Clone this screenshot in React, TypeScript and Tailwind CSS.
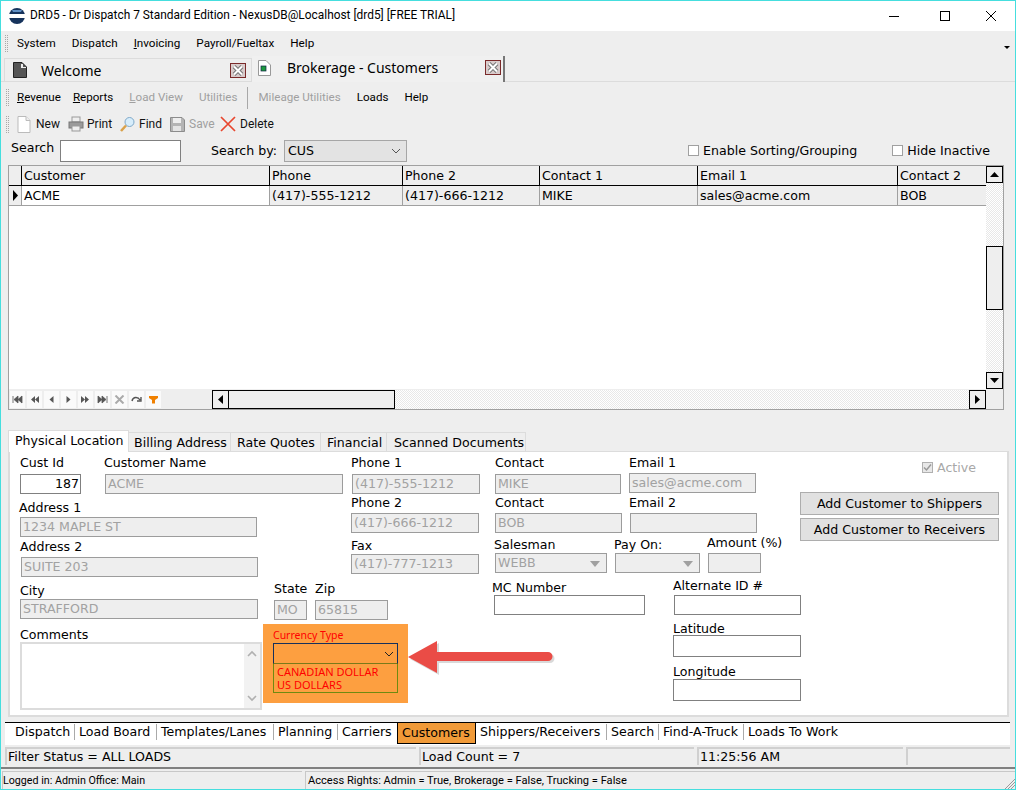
import type { ReactNode } from "react";

const sans = "font-['DejaVu_Sans',sans-serif]";
const ui = "font-['Roboto',sans-serif]";
const noto = "font-['Noto_Sans',sans-serif]";

const columns = [
  { label: "Customer", value: "ACME", w: "w-[248px]" },
  { label: "Phone", value: "(417)-555-1212", w: "w-[133px]" },
  { label: "Phone 2", value: "(417)-666-1212", w: "w-[137px]" },
  { label: "Contact 1", value: "MIKE", w: "w-[158px]" },
  { label: "Email 1", value: "sales@acme.com", w: "w-[200px]" },
  { label: "Contact 2", value: "BOB", w: "w-[88px]" },
];

const bottomTabs = [
  { label: "Dispatch", w: "w-[60px] mr-[4px] border-r" },
  { label: "Load Board", w: "w-[78px] mr-[4px] border-r" },
  { label: "Templates/Lanes", w: "w-[113px] mr-[4px] border-r" },
  { label: "Planning", w: "w-[60px] mr-[4px] border-r" },
  { label: "Carriers", w: "w-[55px]" },
  { label: "Customers", w: "w-[79px]", active: true },
  { label: "Shippers/Receivers", w: "w-[131px] pl-[4px] border-r mr-[4px]" },
  { label: "Search", w: "w-[48px] mr-[4px] border-r" },
  { label: "Find-A-Truck", w: "w-[81px] mr-[4px] border-r" },
  { label: "Loads To Work", w: "w-[110px]" },
];

function Grip() {
  return <div className="w-[3px] h-[17px] mr-[8px] border-x border-dotted border-[#a8a8a8]" />;
}

function CloseBox() {
  return (
    <svg width="16" height="15" viewBox="0 0 16 15" className="shrink-0">
      <rect x="0.5" y="0.5" width="15" height="14" fill="#d9cccc" stroke="#7a2a2a" />
      <path d="M4 3.5 L12 11.5 M12 3.5 L4 11.5" stroke="#777" strokeWidth="4" />
      <path d="M4 3.5 L12 11.5 M12 3.5 L4 11.5" stroke="#fff" strokeWidth="2" />
    </svg>
  );
}

function Box({ className, children }: { className: string; children?: ReactNode }) {
  return (
    <div className={`h-[20px] border border-[#9c9c9c] bg-[#eeeeee] text-[#a2a2a2] pl-[2px] leading-[18px] whitespace-nowrap overflow-hidden ${className}`}>
      {children}
    </div>
  );
}

function ComboBox({ className, children }: { className: string; children?: ReactNode }) {
  return (
    <Box className={`relative ${className}`}>
      {children}
      <svg width="10" height="6" viewBox="0 0 10 6" className="absolute right-[6px] top-[7px]">
        <path d="M0 0 H10 L5 6 Z" fill="#a0a0a0" />
      </svg>
    </Box>
  );
}

function Input({ className, children }: { className: string; children?: ReactNode }) {
  return <div className={`border border-[#808080] bg-white ${className}`}>{children}</div>;
}

function ScrollButton({ dir, className }: { dir: "up" | "down" | "left" | "right"; className: string }) {
  const tri = { up: "M1 8 L5.5 3 L10 8 Z", down: "M1 3 L5.5 8 L10 3 Z", left: "M8 1 L3 5.5 L8 10 Z", right: "M3 1 L8 5.5 L3 10 Z" }[dir];
  return (
    <div className={`border border-black bg-[#eeeeee] flex items-center justify-center shrink-0 ${className}`}>
      <svg width="11" height="11" viewBox="0 0 11 11">
        <path d={tri} fill="#000" />
      </svg>
    </div>
  );
}

function NavIcon({ children }: { children: ReactNode }) {
  return (
    <div className="w-[15px] h-[17px] bg-white/70 flex items-center justify-center mr-[2px]">
      <svg width="11" height="9" viewBox="0 0 11 9">{children}</svg>
    </div>
  );
}

function Navigator() {
  const c = "#555";
  return (
    <div className="flex items-center pl-[1px] w-[203px] shrink-0">
      <NavIcon><path d="M1 1 V8 M10 1 L6 4.5 L10 8 Z M6 1 L2 4.5 L6 8 Z" fill={c} stroke={c} strokeWidth="0.8" /></NavIcon>
      <NavIcon><path d="M10 1 L6 4.5 L10 8 Z M6 1 L2 4.5 L6 8 Z" fill={c} /></NavIcon>
      <NavIcon><path d="M7.5 1 L3.5 4.5 L7.5 8 Z" fill={c} /></NavIcon>
      <NavIcon><path d="M3.5 1 L7.5 4.5 L3.5 8 Z" fill={c} /></NavIcon>
      <NavIcon><path d="M1 1 L5 4.5 L1 8 Z M5 1 L9 4.5 L5 8 Z" fill={c} /></NavIcon>
      <NavIcon><path d="M10 1 V8 M1 1 L5 4.5 L1 8 Z M5 1 L9 4.5 L5 8 Z" fill={c} stroke={c} strokeWidth="0.8" /></NavIcon>
      <NavIcon><path d="M1.5 0.5 L9.5 8.5 M9.5 0.5 L1.5 8.5" stroke="#aaa" strokeWidth="2" /></NavIcon>
      <NavIcon><path d="M1 6 C2 1.5 7 1.5 9 5 M10 2 V6 H6" fill="none" stroke={c} strokeWidth="1.4" /></NavIcon>
      <NavIcon><path d="M1 1 H10 V3 L7 5 V8.5 H4 V5 L1 3 Z" fill="#f08000" /></NavIcon>
    </div>
  );
}

function Toolbar() {
  return (
    <div className={`flex items-center h-[24px] pl-[5px] text-[12px] text-[#111] ${ui}`}>
      <Grip />
      <svg width="14" height="17" viewBox="0 0 14 17" className="mr-[5px]">
        <path d="M1 .5 H9 L13 4.5 V16.5 H1 Z" fill="#fff" stroke="#bbb" />
        <path d="M9 .5 V4.5 H13" fill="#eee" stroke="#bbb" />
      </svg>
      <span className="w-[24px] mr-[8px]">New</span>
      <svg width="16" height="16" viewBox="0 0 16 16" className="mr-[3px]">
        <rect x="4" y="1" width="8" height="5" fill="#eee" stroke="#999" />
        <rect x="1" y="6" width="14" height="6" fill="#9a9a9a" stroke="#777" />
        <rect x="4" y="10" width="8" height="5" fill="#eee" stroke="#999" />
      </svg>
      <span className="w-[25px] mr-[7px]">Print</span>
      <svg width="17" height="17" viewBox="0 0 17 17" className="mr-[3px]">
        <circle cx="10.5" cy="6" r="4.5" fill="#d7edfb" stroke="#7fa8c8" />
        <path d="M7 9.5 L2 15" stroke="#d9a14a" strokeWidth="2.5" />
      </svg>
      <span className="w-[23px] mr-[8px]">Find</span>
      <svg width="15" height="15" viewBox="0 0 15 15" className="mr-[4px]">
        <path d="M.5 .5 H12 L14.5 3 V14.5 H.5 Z" fill="#b4b4b4" stroke="#8c8c8c" />
        <rect x="3" y="1" width="8" height="5" fill="#eee" />
        <rect x="3" y="9" width="8" height="5" fill="#e4e4e4" />
      </svg>
      <span className="w-[24px] mr-[7px] text-[#a0a0a0]">Save</span>
      <svg width="16" height="16" viewBox="0 0 16 16" className="mr-[4px]">
        <path d="M1 1 L15 15 M15 1 L1 15" stroke="#e8472f" strokeWidth="1.7" />
      </svg>
      <span>Delete</span>
    </div>
  );
}

function App() {
  return (
    <div className={`relative w-[1016px] h-[790px] overflow-hidden border border-[#45dede] bg-[#eeeeee] text-[12.6px] text-black ${sans}`}>
      {/* Title bar */}
      <div className={`h-[30px] bg-white flex items-center pl-[8px] text-[11.9px] ${ui}`}>
        <svg width="16" height="16" viewBox="0 0 16 16" className="mr-[5px]">
          <circle cx="8" cy="8" r="8" fill="#16335c" />
          <path d="M0 6 H16 V10 H0 Z" fill="#fff" />
          <path d="M3 2 H13 L12 4 H4 Z" fill="#5f8fc4" />
        </svg>
        <span>DRD5 - Dr Dispatch 7 Standard Edition - NexusDB@Localhost [drd5] [FREE TRIAL]</span>
        <div className="ml-auto flex items-center">
          <svg width="46" height="16" viewBox="0 0 46 16"><path d="M13 8.5 H23" stroke="#000" /></svg>
          <svg width="46" height="16" viewBox="0 0 46 16"><rect x="18.5" y="3.5" width="9" height="9" fill="none" stroke="#000" /></svg>
          <svg width="47" height="16" viewBox="0 0 47 16"><path d="M18 3 L28 13 M28 3 L18 13" stroke="#000" /></svg>
        </div>
      </div>

      {/* Main menu */}
      <div className={`relative h-[25px] flex items-center pl-[4px] text-[11.7px] ${ui}`}>
        <Grip />
        <div className="flex gap-[16px] ml-[1px]">
          <span>System</span>
          <span>Dispatch</span>
          <span><u>I</u>nvoicing</span>
          <span>Payroll/Fueltax</span>
          <span>Help</span>
        </div>
        <svg width="6" height="3" viewBox="0 0 6 3" className="absolute right-[5px] top-[15px]"><path d="M0 0 H6 L3 3 Z" fill="#000" /></svg>
      </div>

      {/* Window tabs */}
      <div className="h-[26px] flex items-end pl-[3px] border-b border-[#dcdcdc]">
        <div className="w-[248px] h-[23px] flex items-center border border-b-0 border-[#dcdcdc] pl-[8px] pr-[5px]">
          <svg width="14" height="16" viewBox="0 0 14 16" className="mr-[14px]">
            <path d="M.5 .5 H9 L13.5 5 V15.5 H.5 Z" fill="#555" stroke="#222" />
            <path d="M8 2 H10 V5 H13 V6 H8 Z" fill="#eee" />
          </svg>
          <span className={`text-[14px] ${noto}`}>Welcome</span>
          <div className="ml-auto"><CloseBox /></div>
        </div>
        <div className="w-[253px] h-[26px] flex items-center border-r-2 border-[#777] pl-[6px] pr-[2px] bg-[#f0f0f0] mb-[-1px] pb-[3px]">
          <svg width="13" height="16" viewBox="0 0 13 16" className="mr-[16px]">
            <path d="M.5 .5 H8 L12.5 5 V15.5 H.5 Z" fill="#fff" stroke="#999" />
            <rect x="3" y="6" width="5" height="5" fill="#1d9a3f" stroke="#124" strokeWidth="0.7" />
          </svg>
          <span className={`text-[14px] ${noto}`}>Brokerage - Customers</span>
          <div className="ml-auto"><CloseBox /></div>
        </div>
      </div>

      {/* Sub menu */}
      <div className={`h-[30px] flex items-center pl-[5px] pt-[1px] text-[11.6px] ${ui}`}>
        <Grip />
        <span className="mr-[12px]"><u>R</u>evenue</span>
        <span className="mr-[16px]"><u>R</u>eports</span>
        <span className="mr-[16px] text-[#a0a0a0]"><u>L</u>oad View</span>
        <span className="mr-[10px] text-[#a0a0a0]">Utilities</span>
        <div className="w-px h-[22px] bg-[#a8a8a8] mr-[10px]" />
        <span className="mr-[16px] text-[#a0a0a0]">Mileage Utilities</span>
        <span className="mr-[16px]">Loads</span>
        <span>Help</span>
      </div>

      <Toolbar />

      {/* Search row */}
      <div className="h-[29px] flex items-center pl-[10px] relative">
        <span className="mb-[5px] w-[49px]">Search</span>
        <Input className="w-[121px] h-[22px]" />
        <span className="ml-[30px] mr-[7px] mt-[1px]">Search by:</span>
        <div className="relative w-[123px] h-[22px] border border-[#a6a6a6] bg-[#e3e3e3] pl-[3px] leading-[20px]">
          CUS
          <svg width="10" height="6" viewBox="0 0 10 6" className="absolute right-[5px] top-[7px]"><path d="M1 1 L5 5 L9 1" fill="none" stroke="#555" /></svg>
        </div>
        <div className="ml-auto flex items-center mt-[1px]">
          <div className="w-[11px] h-[11px] border border-[#a0a0a0] bg-white mr-[4px]" />
          <span className="mr-[35px]">Enable Sorting/Grouping</span>
          <div className="w-[11px] h-[11px] border border-[#a0a0a0] bg-white mr-[4px]" />
          <span className="mr-[25px]">Hide Inactive</span>
        </div>
      </div>

      {/* Customer grid */}
      <div className="ml-[7px] w-[996px] h-[245px] border border-[#a0a0a0] bg-white flex flex-col">
        <div className="flex h-[223px]">
          <div className="w-[977px]">
            <div className="flex h-[20px] bg-[#eeeeee] border-b border-black leading-[20px]">
              <div className="w-[13px] border-r border-black" />
              {columns.map((c) => (
                <div key={c.label} className={`${c.w} border-r border-black pl-[2px] last:border-r-0`}>{c.label}</div>
              ))}
            </div>
            <div className="flex h-[20px] border-b border-[#a0a0a0] leading-[19px]">
              <div className="w-[13px] border-r border-[#a0a0a0] bg-[#eeeeee] flex items-center justify-center">
                <svg width="7" height="11" viewBox="0 0 7 11"><path d="M1 0 L6 5.5 L1 11 Z" fill="#000" /></svg>
              </div>
              {columns.map((c, i) => (
                <div key={c.label} className={`${c.w} border-r border-[#a0a0a0] pl-[2px] last:border-r-0 ${i === 0 ? "bg-white" : "bg-[#eeeeee]"}`}>{c.value}</div>
              ))}
            </div>
          </div>
          <div className="w-[17px] flex flex-col bg-[repeating-conic-gradient(#e8e8e8_0_25%,#fff_0_50%)] bg-[length:2px_2px]">
            <ScrollButton dir="up" className="h-[17px]" />
            <div className="mt-[63px] h-[64px] border border-black bg-[#eeeeee]" />
            <div className="mt-auto"><ScrollButton dir="down" className="h-[17px]" /></div>
          </div>
        </div>
        <div className="flex h-[20px] pt-[1px] bg-[#eeeeee]">
          <Navigator />
          <ScrollButton dir="left" className="w-[17px] h-[19px]" />
          <div className="w-[166px] h-[19px] border border-l-0 border-black bg-[#eeeeee]" />
          <div className="w-[574px] h-[19px] bg-[repeating-conic-gradient(#e8e8e8_0_25%,#fff_0_50%)] bg-[length:2px_2px]" />
          <ScrollButton dir="right" className="w-[17px] h-[19px]" />
        </div>
      </div>

      {/* Form tabs */}
      <div className="flex items-end h-[22px] mt-[19px] ml-[7px] whitespace-nowrap">
        <div className="w-[121px] h-[22px] bg-white border border-b-0 border-[#dcdcdc] pl-[6px] leading-[20px] relative z-10 mb-[-1px]">Physical Location</div>
        <div className="h-[19px] flex border-t border-r border-[#dcdcdc] leading-[19px]">
          <div className="w-[102px] pl-[5px] border-r border-[#dcdcdc]">Billing Address</div>
          <div className="w-[90px] pl-[6px] border-r border-[#dcdcdc]">Rate Quotes</div>
          <div className="w-[66px] pl-[6px] border-r border-[#dcdcdc]">Financial</div>
          <div className="w-[138px] pl-[7px]">Scanned Documents</div>
        </div>
      </div>

      {/* Form panel */}
      <div className="ml-[7px] w-[1001px] h-[266px] bg-white border-2 border-t-1 border-[#dcdcdc] flex leading-[15px]">
        {/* Names and address */}
        <div className="w-[331px] ml-[10px] shrink-0">
          <div className="flex">
            <div className="w-[84px] shrink-0 pt-[3px]">
              <div className="mb-[4px]">Cust Id</div>
              <Input className="w-[61px] h-[20px] text-right pr-[1px] leading-[18px]">187</Input>
            </div>
            <div className="pt-[3px]">
              <div className="mb-[4px]">Customer Name</div>
              <Box className="w-[238px] ml-[1px]">ACME</Box>
            </div>
          </div>
          <div className="mt-[6px] ml-[-1px]">Address 1</div>
          <Box className="w-[237px] mt-[2px]">1234 MAPLE ST</Box>
          <div className="mt-[2px]">Address 2</div>
          <Box className="w-[237px] mt-[3px] ml-[1px]">SUITE 203</Box>
          <div className="flex items-start mt-[5px] w-[368px]">
            <div className="w-[254px] shrink-0 pt-[1px]">
              <div className="mb-[1px]">City</div>
              <Box className="w-[238px]">STRAFFORD</Box>
            </div>
            <div className="w-[41px] shrink-0">
              <div className="mb-[3px] mt-[-1px] pb-[1px]">State</div>
              <Box className="w-[33px]">MO</Box>
            </div>
            <div>
              <div className="mb-[3px] mt-[-1px] pb-[1px]">Zip</div>
              <Box className="w-[73px]">65815</Box>
            </div>
          </div>
          <div className="flex mt-[4px] w-[388px]">
            <div className="w-[243px] shrink-0 pt-[3px]">
              <div>Comments</div>
              <div className="w-[242px] h-[68px] border-2 border-[#dcdcdc] flex justify-end">
                <div className="w-[16px] h-full bg-[#f2f2f2] flex flex-col justify-between items-center py-[6px]">
                  <svg width="10" height="7" viewBox="0 0 10 7"><path d="M1 6 L5 2 L9 6" fill="none" stroke="#b0b0b0" strokeWidth="1.6" /></svg>
                  <svg width="10" height="7" viewBox="0 0 10 7"><path d="M1 1 L5 5 L9 1" fill="none" stroke="#b0b0b0" strokeWidth="1.6" /></svg>
                </div>
              </div>
            </div>
            <div className={`w-[145px] h-[79px] bg-[#fd9f40] pl-[10px] pt-[5px] text-[#ff0000] text-[10.5px] ${noto}`}>
              <div className="leading-[13px] mb-[1px]">Currency Type</div>
              <div className="relative w-[125px] h-[21px] border border-[#15305c] border-b-[#7a7a1a]">
                <svg width="10" height="6" viewBox="0 0 10 6" className="absolute right-[3px] top-[7px]"><path d="M1 1 L5 5 L9 1" fill="none" stroke="#222" /></svg>
              </div>
              <div className="w-[125px] h-[29px] border border-t-0 border-[#6f8a10] pl-[3px] pt-[1px] text-[11px] leading-[13px]">
                <div>CANADIAN DOLLAR</div>
                <div>US DOLLARS</div>
              </div>
            </div>
          </div>
        </div>

        {/* Phones */}
        <div className="w-[144px] shrink-0 pt-[3px]">
          <div className="mb-[4px]">Phone 1</div>
          <Box className="w-[128px] ml-[1px]">(417)-555-1212</Box>
          <div className="mt-[1px] mb-[3px]">Phone 2</div>
          <Box className="w-[128px]">(417)-666-1212</Box>
          <div className="mt-[5px] mb-[1px]">Fax</div>
          <Box className="w-[128px]">(417)-777-1213</Box>
        </div>

        {/* Contacts, salesman and ids */}
        <div className="w-[305px] shrink-0 pt-[3px]">
          <div className="flex">
            <div className="w-[134px] shrink-0">
              <div className="mb-[4px]">Contact</div>
              <Box className="w-[126px]">MIKE</Box>
              <div className="mt-[1px] mb-[3px]">Contact</div>
              <Box className="w-[127px]">BOB</Box>
            </div>
            <div>
              <div className="mb-[3px]">Email 1</div>
              <Box className="w-[127px]">sales@acme.com</Box>
              <div className="mt-[2px] mb-[3px]">Email 2</div>
              <Box className="w-[127px] ml-[1px]" />
            </div>
          </div>
          <div className="flex items-end mt-[2px] ml-[-1px]">
            <div className="w-[120px] shrink-0">
              <div className="mb-[1px]">Salesman</div>
              <ComboBox className="w-[112px] ml-[1px]">WEBB</ComboBox>
            </div>
            <div className="w-[93px] shrink-0">
              <div className="mb-[1px]">Pay On:</div>
              <ComboBox className="w-[85px] ml-[1px]" />
            </div>
            <div>
              <div className="mb-[3px]">Amount (%)</div>
              <Box className="w-[53px] ml-[1px]" />
            </div>
          </div>
          <div className="flex mt-[5px]">
            <div className="w-[180px] shrink-0 ml-[-3px] pt-[2px]">
              <div>MC Number</div>
              <Input className="w-[151px] h-[20px] ml-[2px]" />
            </div>
            <div className="ml-[1px]">
              <div className="mb-[2px]">Alternate ID #</div>
              <Input className="w-[127px] h-[20px] ml-[1px]" />
              <div className="mt-[6px] mb-[-1px]">Latitude</div>
              <Input className="w-[128px] h-[22px]" />
              <div className="mt-[7px]">Longitude</div>
              <Input className="w-[128px] h-[22px]" />
            </div>
          </div>
        </div>

        {/* Active flag and actions */}
        <div className="flex-1 pt-[8px]">
          <div className="flex items-center ml-[122px] text-[#a8a8a8]">
            <div className="w-[11px] h-[11px] border border-[#b0b0b0] bg-[#e8e8e8] mr-[4px] flex items-center justify-center">
              <svg width="9" height="9" viewBox="0 0 9 9"><path d="M1 4.5 L3.5 7 L8 1.5" fill="none" stroke="#999" strokeWidth="1.5" /></svg>
            </div>
            <span>Active</span>
          </div>
          <div className="mt-[17px] w-[199px] h-[23px] border border-[#adadad] bg-[#e1e1e1] text-center leading-[21px]">Add Customer to Shippers</div>
          <div className="mt-[3px] w-[199px] h-[23px] border border-[#adadad] bg-[#e1e1e1] text-center leading-[21px]">Add Customer to Receivers</div>
        </div>
      </div>

      {/* Module tabs */}
      <div className="mt-[5px] ml-[4px] w-[1005px] h-[23px] bg-white border-t border-black flex whitespace-nowrap">
        <div className="w-[10px]" />
        {bottomTabs.map((t) => (
          <div
            key={t.label}
            className={t.active ? `${t.w} pl-[4px] h-[22px] mt-[-1px] bg-[#f09a38] border border-black leading-[20px]` : `${t.w} border-[#aaaaaa] h-[16px] mt-[1px] leading-[16px]`}
          >
            {t.label}
          </div>
        ))}
      </div>

      {/* Status bars */}
      <div className="flex mt-[2px] ml-[4px] h-[18px] gap-[3px] leading-[16px]">
        <div className="w-[411px] border-l-2 border-t-2 border-[#d0d0d0] pl-[1px]">Filter Status = ALL LOADS</div>
        <div className="w-[275px] border-l-2 border-t-2 border-[#d0d0d0] pl-[1px]">Load Count = 7</div>
        <div className="w-[206px] border-l-2 border-t-2 border-[#d0d0d0] pl-[1px]">11:25:56 AM</div>
        <div className="w-[104px] border-l-2 border-t-2 border-[#d0d0d0]" />
      </div>
      <div className="mt-[2px] border-t-2 border-[#808080] h-[22px] pt-[2px] flex gap-[3px] pl-[1px] leading-[17px]">
        <div className={`w-[300px] h-[18px] border-t border-l border-[#c8c8c8] whitespace-nowrap text-[10.7px] ${ui}`}>Logged in: Admin Office: Main</div>
        <div className={`flex-1 h-[18px] border-t border-l border-[#c8c8c8] pl-[2px] relative text-[11.1px] ${ui}`}>
          Access Rights: Admin = True, Brokerage = False, Trucking = False
          <svg width="11" height="11" viewBox="0 0 11 11" className="absolute right-0 bottom-0"><path d="M11 1 L1 11 M11 4 L4 11 M11 7 L7 11" stroke="#999" /></svg>
        </div>
      </div>

      {/* Callout arrow */}
      <svg width="150" height="38" viewBox="0 0 150 38" className="absolute left-[405px] top-[638px]">
        <path d="M2 18 L31 2 V13 H142 a4.5 4.5 0 0 1 0 9 H31 V34 Z" fill="#000" opacity="0.15" transform="translate(2 2)" />
        <path d="M2 18 L31 2 V13 H142 a4.5 4.5 0 0 1 0 9 H31 V34 Z" fill="#ea4c46" />
      </svg>
    </div>
  );
}

export default App;
